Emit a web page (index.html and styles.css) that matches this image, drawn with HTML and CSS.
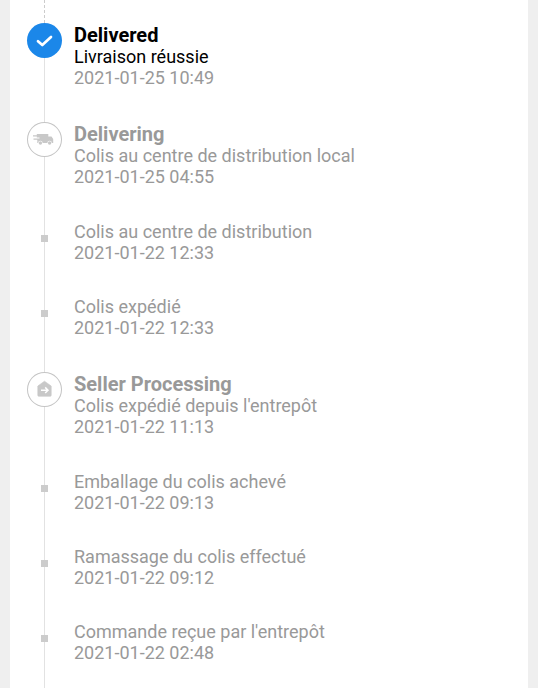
FILE: index.html
```html
<!DOCTYPE html>
<html lang="fr">
<head>
<meta charset="utf-8">
<meta name="viewport" content="width=device-width, initial-scale=1">
<title>Suivi du colis</title>
<link rel="stylesheet" href="styles.css">
</head>
<body>
<main class="card">
  <div class="lead-in"></div>
  <ol class="timeline">
    <li class="step step-current">
      <div class="rail">
        <span class="badge badge-done">
          <svg viewBox="0 0 35 35" aria-hidden="true"><path d="M11 18.200L15.300 22L24 14" fill="none" stroke="#fff" stroke-width="2.700" stroke-linecap="round" stroke-linejoin="round"/></svg>
        </span>
      </div>
      <div class="info">
        <h2>Delivered</h2>
        <p>Livraison réussie</p>
        <time datetime="2021-01-25T10:49">2021-01-25 10:49</time>
      </div>
    </li>
    <li class="step step-stage">
      <div class="rail">
        <span class="badge">
          <svg viewBox="0 0 35 35" aria-hidden="true">
            <path d="M9.800 12H21.300V14.500H24.500L26.200 17V21H10.300V17.800H6.500V16.600H12.500V15.600H9.800V14.400H6V13.200H9.800Z" fill="#c8c8c8"/>
            <circle cx="13.400" cy="21" r="2.200" fill="#fff"/>
            <circle cx="22.600" cy="21" r="2.200" fill="#fff"/>
            <circle cx="13.400" cy="21" r="1.700" fill="#c8c8c8"/>
            <circle cx="22.600" cy="21" r="1.700" fill="#c8c8c8"/>
          </svg>
        </span>
      </div>
      <div class="info">
        <h2>Delivering</h2>
        <p>Colis au centre de distribution local</p>
        <time datetime="2021-01-25T04:55">2021-01-25 04:55</time>
      </div>
    </li>
    <li class="step">
      <div class="rail"><span class="dot"></span></div>
      <div class="info">
        <p>Colis au centre de distribution</p>
        <time datetime="2021-01-22T12:33">2021-01-22 12:33</time>
      </div>
    </li>
    <li class="step">
      <div class="rail"><span class="dot"></span></div>
      <div class="info">
        <p>Colis expédié</p>
        <time datetime="2021-01-22T12:33">2021-01-22 12:33</time>
      </div>
    </li>
    <li class="step step-stage">
      <div class="rail">
        <span class="badge">
          <svg viewBox="0 0 35 35" aria-hidden="true">
            <path d="M17.500 9.200L24.200 14V23.300Q24.200 24.300 23.200 24.300H11.800Q10.800 24.300 10.800 23.300V14Z" fill="#c8c8c8" stroke="#c8c8c8" stroke-width=".6" stroke-linejoin="round"/>
            <path d="M14 18.200H20.800M18.200 15.400L21 18.200L18.200 21" fill="none" stroke="#fff" stroke-width="1.500"/>
          </svg>
        </span>
      </div>
      <div class="info">
        <h2>Seller Processing</h2>
        <p>Colis expédié depuis l'entrepôt</p>
        <time datetime="2021-01-22T11:13">2021-01-22 11:13</time>
      </div>
    </li>
    <li class="step">
      <div class="rail"><span class="dot"></span></div>
      <div class="info">
        <p>Emballage du colis achevé</p>
        <time datetime="2021-01-22T09:13">2021-01-22 09:13</time>
      </div>
    </li>
    <li class="step">
      <div class="rail"><span class="dot"></span></div>
      <div class="info">
        <p>Ramassage du colis effectué</p>
        <time datetime="2021-01-22T09:12">2021-01-22 09:12</time>
      </div>
    </li>
    <li class="step step-last">
      <div class="rail"><span class="dot"></span></div>
      <div class="info">
        <p>Commande reçue par l'entrepôt</p>
        <time datetime="2021-01-22T02:48">2021-01-22 02:48</time>
      </div>
    </li>
  </ol>
</main>
</body>
</html>
```
FILE: styles.css
```css
* {
  box-sizing: border-box;
}

body {
  margin: 0;
  background: #efefef;
  color: #999;
  font-family: Roboto, "Liberation Sans", sans-serif;
  font-size: 18px;
}

.card {
  display: flex;
  flex-direction: column;
  min-height: 100vh;
  margin: 0 10px;
  padding: 0 17px;
  background: #fff;
}

.lead-in {
  width: 18px;
  height: 23px;
  border-right: 1px dashed #ccc;
}

.timeline {
  display: flex;
  flex: 1;
  flex-direction: column;
  margin: 0;
  padding: 0;
  list-style: none;
}

.step {
  display: grid;
  grid-template-columns: 35px 1fr;
  column-gap: 12px;
}

.rail {
  display: flex;
  justify-content: center;
  align-items: flex-start;
  background: linear-gradient(#e2e2e2, #e2e2e2) center / 1px 100% no-repeat;
}

.badge {
  width: 35px;
  height: 35px;
  border-radius: 50%;
  background: #fff;
  box-shadow: inset 0 0 0 1px #c4c4c4;
}

.badge-done {
  background: #1b87e9;
  box-shadow: none;
}

.badge svg {
  display: block;
  width: 100%;
  height: 100%;
}

.dot {
  width: 7px;
  height: 7px;
  margin-top: 13px;
  background: #ccc;
}

.info {
  padding-bottom: 34px;
}

.step-stage .info {
  padding-bottom: 35px;
}

.step-last {
  flex: 1;
}

.step-last .info {
  padding-bottom: 24px;
}

h2 {
  margin: 0;
  font-size: 20px;
  font-weight: 700;
  line-height: 24px;
}

p {
  margin: 0;
  line-height: 20px;
}

time {
  display: block;
  line-height: 21px;
}

.step-current h2,
.step-current p {
  color: #000;
}
```
